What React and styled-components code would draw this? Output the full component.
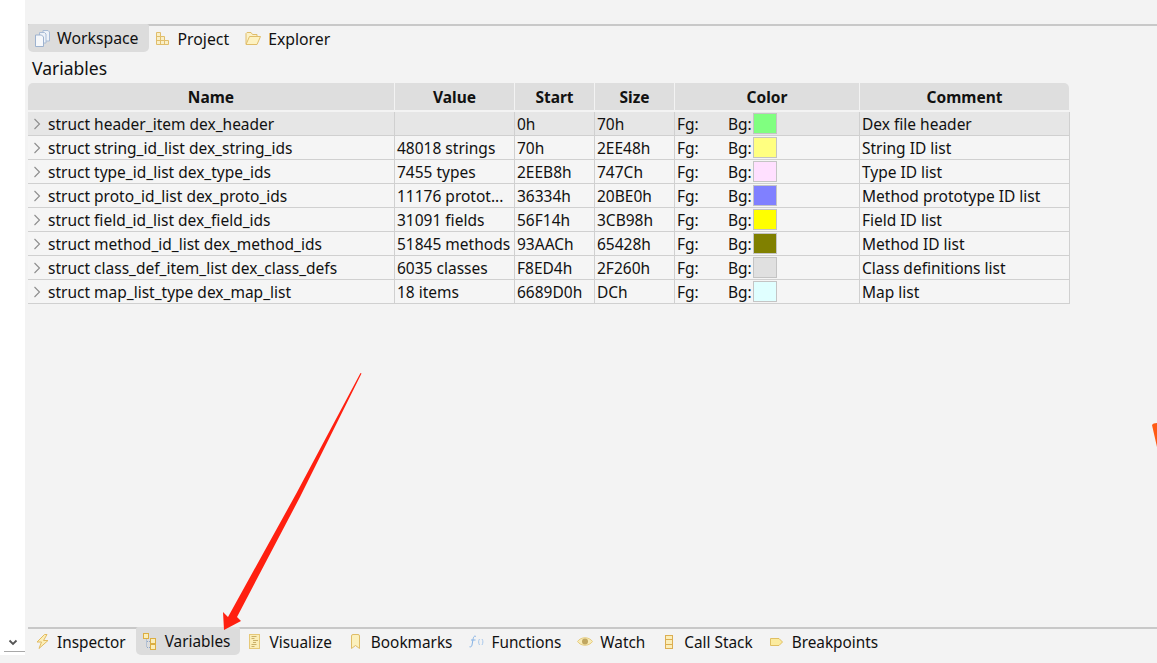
import styled, { createGlobalStyle } from "styled-components";

const GlobalStyle = createGlobalStyle`
  html, body {
    margin: 0;
    padding: 0;
    background: #f3f3f3;
  }
  body {
    font-family: "Noto Sans", "Open Sans", sans-serif;
    color: #111;
    overflow: hidden;
  }
`;

const Page = styled.div`
  position: relative;
  width: 1157px;
  height: 663px;
  display: flex;
  overflow: hidden;
`;
const LeftStrip = styled.div`
  width: 25px;
  height: 655px;
  background: #fff;
  display: flex;
  align-items: flex-end;
  justify-content: flex-end;
`;
const StripSelect = styled.div`
  width: 21px;
  height: 19px;
  margin-bottom: 3px;
  border-bottom: 1px solid #a8a8a8;
  display: flex;
  justify-content: center;
  align-items: center;
  padding-right: 3px;
  box-sizing: border-box;
`;
const Main = styled.div`
  flex: 1;
  display: flex;
  flex-direction: column;
  padding-top: 24px;
  min-width: 0;
`;
const TabBar = styled.div`
  display: flex;
  align-items: flex-start;
  height: 26px;
  margin-left: 3px;
  border-top: 2px solid #c8c8c8;
`;
const Tab = styled.div`
  height: ${(p) => (p.$active ? "28px" : "25px")};
  margin-top: ${(p) => (p.$active ? "-2px" : "0")};
  padding: 0 10px 0 6px;
  display: flex;
  align-items: center;
  gap: 7px;
  font-size: ${(p) => p.$size}px;
  line-height: 24px;
  white-space: nowrap;
  background: ${(p) => (p.$active ? "#dcdcdc" : "transparent")};
  border-radius: 2px 2px 5px 5px;
`;
const IconSlot = styled.span`
  width: 16px;
  height: 16px;
  display: flex;
  align-items: center;
  justify-content: center;
`;
const PanelTitle = styled.div`
  margin: 3px 0 0 7px;
  font-size: 17.5px;
  line-height: 26px;
  height: 28px;
`;
const Table = styled.div`
  width: 1042px;
  margin-left: 3px;
  flex: 1;
  font-size: 15.5px;
`;
const Row = styled.div`
  display: grid;
  grid-template-columns: 366px 120px 80px 80px 185px 211px;
  height: 24px;
  box-sizing: border-box;
  border-bottom: 1px solid #d0d0d0;
  background: ${(p) => (p.$selected ? "#e6e6e6" : "#f5f5f5")};
`;
const HeaderRow = styled(Row)`
  width: 1041px;
  grid-template-columns: 366px 120px 80px 80px 185px 210px;
  height: 29px;
  background: linear-gradient(#dedede 0 27px, #f3f3f3 27px);
  border-bottom: 0;
  border-radius: 5px 5px 0 0;
  font-weight: 700;
`;
const HeadCell = styled.div`
  height: 27px;
  line-height: 29px;
  text-align: center;
  border-left: ${(p) => (p.$first ? "0" : "1px solid #f3f3f3")};
`;
const Cell = styled.div`
  display: flex;
  align-items: center;
  padding-left: ${(p) => p.$pad ?? 2}px;
  padding-top: 1px;
  line-height: 22px;
  white-space: nowrap;
  overflow: hidden;
  border-right: ${(p) => (p.$last ? "1px solid #d0d0d0" : "0")};
  border-left: ${(p) => (p.$first ? "0" : "1px solid #d0d0d0")};
`;
const ColorLabel = styled.span`
  width: ${(p) => p.$width}px;
  flex: none;
`;
const Swatch = styled.span`
  width: 24px;
  height: 21px;
  margin-top: -2px;
  box-sizing: border-box;
  border: 1px solid #c4c4c4;
  background: ${(p) => p.$color};
`;
const BottomBar = styled(TabBar)`
  margin-bottom: 8px;
`;
const ArrowLayer = styled.svg`
  position: absolute;
  left: 0;
  top: 0;
  pointer-events: none;
`;

const Chevron = () => (
  <svg width="8" height="12" viewBox="0 0 8 12" style={{ marginRight: 7, marginTop: -1 }}>
    <path d="M1.5 1 L6.5 6 L1.5 11" fill="none" stroke="#8d8d8d" strokeWidth="1.1" />
  </svg>
);

const icons = {
  workspace: (
    <svg width="15" height="17" viewBox="0 0 15 17">
      <path d="M8 .5h5l1.500 1.500v9H8z" fill="#eef2f8" stroke="#a9bcd6" />
      <path d="M4.500 2.500h5l1.500 1.500v9H4.500z" fill="#eef2f8" stroke="#a9bcd6" />
      <path d="M.500 5h6l2 2v9.500h-8z" fill="#f6f8fb" stroke="#9db2cf" />
    </svg>
  ),
  project: (
    <svg width="13" height="13" viewBox="0 0 13 13">
      <path d="M.500.500h4v4h4v4h4v4h-12z" fill="#f9efc8" stroke="#e0bd6a" />
      <path d="M.500 4.500h4v8M.500 8.500h8v4" fill="none" stroke="#e0bd6a" />
    </svg>
  ),
  explorer: (
    <svg width="16" height="13" viewBox="0 0 16 13">
      <path d="M1 12V1.500L2 .5h4l1.500 2h4.500V5" fill="#fbf1c8" stroke="#e0bd6a" />
      <path d="M1 12.500l3.500-8H15.500l-3.500 8z" fill="#fdf2c2" stroke="#e0bd6a" />
    </svg>
  ),
  inspector: (
    <svg width="13" height="15" viewBox="0 0 13 15">
      <path d="M8.500.5L1 8h4.500L3 14.500 12 6.500H7.500L11 .5z" fill="#fbeeb9" stroke="#e2bb60" strokeWidth="1" />
    </svg>
  ),
  variables: (
    <svg width="14" height="17" viewBox="0 0 14 17">
      <rect x="0.500" y="0.500" width="5" height="5" fill="#fbeeb9" stroke="#dcae42" />
      <rect x="7.500" y="5.500" width="5" height="5" fill="#fbeeb9" stroke="#dcae42" />
      <rect x="7.500" y="11.500" width="5" height="5" fill="#fbeeb9" stroke="#dcae42" />
      <path d="M3.500 6.500v8M4 8.500h3M4 14.500h3" stroke="#8ea6c8" strokeDasharray="1 1" fill="none" />
    </svg>
  ),
  visualize: (
    <svg width="11" height="15" viewBox="0 0 11 15">
      <rect x="0.500" y="0.500" width="10" height="14" fill="#fbeeb9" stroke="#e6c878" />
      <path d="M2.500 2.500h5M2.500 4.500h3M4 6.500h5M4 8.500h3M2.500 10.500h5M2.500 12.500h3" stroke="#c4a860" strokeWidth="0.9" />
    </svg>
  ),
  bookmarks: (
    <svg width="9" height="15" viewBox="0 0 9 15">
      <path d="M.500 2A1.500 1.500 0 0 1 2 .5h5A1.500 1.500 0 0 1 8.500 2v12.500l-4-3-4 3z" fill="#fbf0bd" stroke="#dfbc66" />
    </svg>
  ),
  functions: (
    <svg width="16" height="13" viewBox="0 0 16 13">
      <path d="M8 1.500C6 .5 5.500 2 5 4.500L4 10c-.3 1.500-1 2.200-2.500 1.800M3 5H7.500" fill="none" stroke="#86b3e6" />
      <path d="M11.500 4c-1.200 1.800-1.200 3.800 0 6M14 4c1.200 1.800 1.200 3.800 0 6" fill="none" stroke="#a8c8ec" />
    </svg>
  ),
  watch: (
    <svg width="16" height="11" viewBox="0 0 16 11">
      <path d="M.500 5.500C4 .5 12 .5 15.500 5.500 12 10.500 4 10.500 .500 5.500z" fill="#f8ecb8" stroke="#e6cc80" />
      <circle cx="8" cy="5.500" r="3" fill="#c0a660" />
    </svg>
  ),
  callStack: (
    <svg width="8" height="14" viewBox="0 0 8 14">
      <rect x="0.500" y="0.500" width="7" height="13" fill="#fbeeb9" stroke="#dcae52" />
      <path d="M0 4.500h8M0 9.500h8" stroke="#dcae52" />
    </svg>
  ),
  breakpoints: (
    <svg width="13" height="8" viewBox="0 0 13 8">
      <path d="M.500.500h8.500l3.500 3.500L9 7.500H.500z" fill="#fbeb9f" stroke="#e0bf62" />
    </svg>
  ),
};

const rows = [
  { name: "struct header_item dex_header", value: "", start: "0h", size: "70h", color: "#80ff80", comment: "Dex file header" },
  { name: "struct string_id_list dex_string_ids", value: "48018 strings", start: "70h", size: "2EE48h", color: "#ffff80", comment: "String ID list" },
  { name: "struct type_id_list dex_type_ids", value: "7455 types", start: "2EEB8h", size: "747Ch", color: "#ffe0ff", comment: "Type ID list" },
  { name: "struct proto_id_list dex_proto_ids", value: "11176 protot...", start: "36334h", size: "20BE0h", color: "#8080ff", comment: "Method prototype ID list" },
  { name: "struct field_id_list dex_field_ids", value: "31091 fields", start: "56F14h", size: "3CB98h", color: "#ffff00", comment: "Field ID list" },
  { name: "struct method_id_list dex_method_ids", value: "51845 methods", start: "93AACh", size: "65428h", color: "#808000", comment: "Method ID list" },
  { name: "struct class_def_item_list dex_class_defs", value: "6035 classes", start: "F8ED4h", size: "2F260h", color: "#e0e0e0", comment: "Class definitions list" },
  { name: "struct map_list_type dex_map_list", value: "18 items", start: "6689D0h", size: "DCh", color: "#e0ffff", comment: "Map list" },
];

const topTabs = [
  { label: "Workspace", icon: "workspace", active: true },
  { label: "Project", icon: "project" },
  { label: "Explorer", icon: "explorer" },
];

const bottomTabs = [
  { label: "Inspector", icon: "inspector" },
  { label: "Variables", icon: "variables", active: true },
  { label: "Visualize", icon: "visualize" },
  { label: "Bookmarks", icon: "bookmarks" },
  { label: "Functions", icon: "functions" },
  { label: "Watch", icon: "watch" },
  { label: "Call Stack", icon: "callStack" },
  { label: "Breakpoints", icon: "breakpoints" },
];

export default function App() {
  return (
    <Page>
      <GlobalStyle />
      <LeftStrip>
        <StripSelect>
          <svg width="10" height="7" viewBox="0 0 10 7">
            <path d="M1.500 1.500L5 5l3.500-3.500" fill="none" stroke="#555" strokeWidth="1.800" />
          </svg>
        </StripSelect>
      </LeftStrip>
      <Main>
        <TabBar>
          {topTabs.map((t) => (
            <Tab key={t.label} $active={t.active} $size={15.8}>
              <IconSlot>{icons[t.icon]}</IconSlot>
              {t.label}
            </Tab>
          ))}
        </TabBar>
        <PanelTitle>Variables</PanelTitle>
        <Table>
          <HeaderRow>
            <HeadCell $first>Name</HeadCell>
            <HeadCell>Value</HeadCell>
            <HeadCell>Start</HeadCell>
            <HeadCell>Size</HeadCell>
            <HeadCell>Color</HeadCell>
            <HeadCell>Comment</HeadCell>
          </HeaderRow>
          {rows.map((r, i) => (
            <Row key={r.name} $selected={i === 0}>
              <Cell $first $pad={5}>
                <Chevron />
                {r.name}
              </Cell>
              <Cell>{r.value}</Cell>
              <Cell>{r.start}</Cell>
              <Cell>{r.size}</Cell>
              <Cell>
                <ColorLabel $width={51}>Fg:</ColorLabel>
                <ColorLabel $width={25}>Bg:</ColorLabel>
                <Swatch $color={r.color} />
              </Cell>
              <Cell $last>{r.comment}</Cell>
            </Row>
          ))}
        </Table>
        <BottomBar>
          {bottomTabs.map((t) => (
            <Tab key={t.label} $active={t.active} $size={15.35}>
              <IconSlot>{icons[t.icon]}</IconSlot>
              {t.label}
            </Tab>
          ))}
        </BottomBar>
      </Main>
      <ArrowLayer width="1157" height="663" viewBox="0 0 1157 663">
        <path d="M360.500 373 L361.500 373.500 L300 497 L237 617 L241 621 L224 630 L223 612 L228 617 L296 494 Z" fill="#ff2010" />
        <path d="M1152 425 Q1153 423 1157 423 L1157 447 Z" fill="#ff5a14" />
      </ArrowLayer>
    </Page>
  );
}
